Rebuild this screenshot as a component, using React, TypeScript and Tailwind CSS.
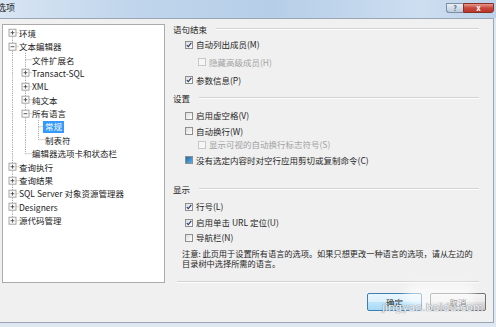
import React from 'react';

type C = { u?: boolean; d?: boolean; r?: boolean; b?: 'p' | 'm' };
const F: C = { u: true, d: true };

const rows: { t: string; c: C[]; sel?: boolean }[] = [
  { t: '环境', c: [{ d: true, r: true, b: 'p' }] },
  { t: '文本编辑器', c: [{ u: true, d: true, r: true, b: 'm' }] },
  { t: '文件扩展名', c: [F, { u: true, d: true, r: true }] },
  { t: 'Transact-SQL', c: [F, { u: true, d: true, r: true, b: 'p' }] },
  { t: 'XML', c: [F, { u: true, d: true, r: true, b: 'p' }] },
  { t: '纯文本', c: [F, { u: true, d: true, r: true, b: 'p' }] },
  { t: '所有语言', c: [F, { u: true, d: true, r: true, b: 'm' }] },
  { t: '常规', c: [F, F, { u: true, d: true, r: true }], sel: true },
  { t: '制表符', c: [F, F, { u: true, r: true }] },
  { t: '编辑器选项卡和状态栏', c: [F, { u: true, r: true }] },
  { t: '查询执行', c: [{ u: true, d: true, r: true, b: 'p' }] },
  { t: '查询结果', c: [{ u: true, d: true, r: true, b: 'p' }] },
  { t: 'SQL Server 对象资源管理器', c: [{ u: true, d: true, r: true, b: 'p' }] },
  { t: 'Designers', c: [{ u: true, d: true, r: true, b: 'p' }] },
  { t: '源代码管理', c: [{ u: true, r: true, b: 'p' }] },
];

function TreeCell({ u, d, r, b }: C) {
  const W = 13;
  const H = 13.4;
  const cx = 6.5;
  const cy = 6.7;
  const lc = '#a6a6a6';
  return (
    <svg width={W} height={H} viewBox={`0 0 ${W} ${H}`} className="block shrink-0">
      {u && <line x1={cx} y1={0} x2={cx} y2={cy} stroke={lc} strokeWidth={1} strokeDasharray="1 1" />}
      {d && <line x1={cx} y1={cy} x2={cx} y2={H} stroke={lc} strokeWidth={1} strokeDasharray="1 1" />}
      {r && <line x1={cx} y1={cy} x2={W} y2={cy} stroke={lc} strokeWidth={1} strokeDasharray="1 1" />}
      {b && (
        <>
          <rect x={3} y={3.2} width={7} height={7} fill="#fbfbfb" stroke="#9c9c9c" strokeWidth={0.9} />
          <line x1={4.6} y1={cy} x2={8.4} y2={cy} stroke="#4a4a4a" strokeWidth={0.9} />
          {b === 'p' && <line x1={cx} y1={4.8} x2={cx} y2={8.6} stroke="#4a4a4a" strokeWidth={0.9} />}
        </>
      )}
    </svg>
  );
}

function CB({ s, dis }: { s?: 'c' | 'f'; dis?: boolean }) {
  return (
    <span
      className={
        dis
          ? 'flex h-[8px] w-[8px] shrink-0 items-center justify-center border border-[#c8c8c8] bg-[#f6f6f6]'
          : 'flex h-[8px] w-[8px] shrink-0 items-center justify-center border border-[#8e8f8f] bg-[linear-gradient(135deg,#dcdcdc,#ffffff)]'
      }
    >
      {s === 'c' && (
        <svg width={6} height={6} viewBox="0 0 6 6" className="block">
          <path d="M0.8 3.1 L2.3 4.7 L5.3 0.9" fill="none" stroke="#2d3f6b" strokeWidth={1.2} />
        </svg>
      )}
      {s === 'f' && <span className="block h-[6px] w-[6px] bg-[linear-gradient(135deg,#1f68a8,#5fb0e6)]" />}
    </span>
  );
}

function Opt({ h, lvl2, s, dis, t }: { h: string; lvl2?: boolean; s?: 'c' | 'f'; dis?: boolean; t: string }) {
  return (
    <div className={`flex items-center ${h}`}>
      <div className={lvl2 ? 'ml-[25px] flex items-center gap-[3px]' : 'ml-[12px] flex items-center gap-[3px]'}>
        <CB s={s} dis={dis} />
        <span className={dis ? 'text-[#a3a3a3]' : 'text-[#262626]'}>{t}</span>
      </div>
    </div>
  );
}

function Head({ h, t }: { h: string; t: string }) {
  return (
    <div className={`flex items-center ${h}`}>
      <span className="text-[#262626]">{t}</span>
      <div className="ml-[9px] h-[2px] flex-1 border-t border-b border-t-[#d3d3d3] border-b-[#fdfdfd]" />
    </div>
  );
}

export default function App() {
  return (
    <div className="relative flex h-[327px] w-[496px] flex-col overflow-hidden bg-[#dfe8f2] font-['Noto_Sans_CJK_SC',sans-serif] text-[8.5px] leading-none">
      {/* Title bar */}
      <div className="flex h-[18px] shrink-0 items-start bg-[linear-gradient(to_right,#d8e5f3,#c1d6ec_25%,#b6cee8_55%,#cddef0_85%,#bcd2ea)]">
        <span className="-ml-[3px] mt-[3px] text-[9px] text-[#1e1e1e]">选项</span>
        <div className="ml-auto mr-[2px] mt-[3px] flex h-[10px]">
          <div className="flex w-[17px] items-center justify-center rounded-bl-[3px] border border-r-0 border-[#7c8ea4] bg-[linear-gradient(#e9eff6,#bccbdc)] text-[7px] font-bold text-[#4b5b70]">
            ?
          </div>
          <div className="flex w-[31px] items-center justify-center rounded-br-[3px] border border-[#8a2f25] bg-[linear-gradient(#e59a8c,#c9473a_50%,#b8362a)] text-[8px] font-bold text-white">
            x
          </div>
        </div>
      </div>

      {/* Body */}
      <div className="flex h-[305px] w-[494px] shrink-0 flex-col border-t border-r border-b border-[#9aa6b4] bg-[#f0f0f0]">
        <div className="flex items-start pl-[2px]">
          {/* Tree */}
          <div className="mt-[5px] flex h-[259px] w-[163px] shrink-0 flex-col border border-[#ababab] bg-white pl-[3px] pt-[1.3px]">
            {rows.map((row, i) => (
              <div key={i} className="flex h-[13.4px] items-center">
                {row.c.map((c, j) => (
                  <TreeCell key={j} {...c} />
                ))}
                <span
                  className={
                    row.sel
                      ? '-ml-[2px] flex h-[12px] items-center whitespace-nowrap bg-[#3399ff] px-[2px] text-white'
                      : '-ml-[2px] flex h-[12px] items-center whitespace-nowrap px-[2px] text-[#222]'
                  }
                >
                  {row.t}
                </span>
              </div>
            ))}
          </div>

          {/* Right column */}
          <div className="ml-[8px] mt-[3px] flex h-[261px] w-[306px] flex-col">
            <Head h="h-[14px]" t="语句结束" />
            <Opt h="h-[17px]" s="c" t="自动列出成员(M)" />
            <Opt h="h-[18px]" lvl2 dis t="隐藏高级成员(H)" />
            <Opt h="h-[18px]" s="c" t="参数信息(P)" />
            <Head h="h-[18px]" t="设置" />
            <Opt h="h-[17px]" t="启用虚空格(V)" />
            <Opt h="h-[14px]" t="自动换行(W)" />
            <Opt h="h-[13px]" lvl2 dis t="显示可视的自动换行标志符号(S)" />
            <Opt h="h-[18px]" s="f" t="没有选定内容时对空行应用剪切或复制命令(C)" />
            <div className="h-[11px]" />
            <Head h="h-[18px]" t="显示" />
            <Opt h="h-[17px]" s="c" t="行号(L)" />
            <Opt h="h-[15px]" s="c" t="启用单击 URL 定位(U)" />
            <Opt h="h-[15px]" t="导航栏(N)" />
            <div className="ml-[9px] mt-[2.5px] text-[8.2px] leading-[10.5px] text-[#262626]">
              <div className="whitespace-nowrap">注意: 此页用于设置所有语言的选项。如果只想更改一种语言的选项，请从左边的</div>
              <div className="whitespace-nowrap">目录树中选择所需的语言。</div>
            </div>
            <div className="ml-[4px] mt-auto h-[2px] border-t border-b border-t-[#d3d3d3] border-b-[#fdfdfd]" />
          </div>
        </div>

        {/* Buttons */}
        <div className="mt-[10px] flex justify-end gap-[8px] pr-[7px]">
          <div className="flex h-[18px] w-[55px] items-center justify-center rounded-[2px] border border-[#3c7fb1] bg-[linear-gradient(#eaf6fd,#d9f0fc_50%,#bee6fd_50%,#a7d9f5)] text-[#1e1e1e]">
            确定
          </div>
          <div className="flex h-[18px] w-[56px] items-center justify-center rounded-[2px] border border-[#707070] bg-[linear-gradient(#f2f2f2,#ebebeb_50%,#dddddd_50%,#cfcfcf)] text-[#1e1e1e]">
            取消
          </div>
        </div>
      </div>

      {/* Watermark overlay */}
      <div className="absolute left-[405px] top-[283px] h-[26px] w-[70px] rounded-[12px] bg-white/55 blur-[4px]" />
      <div className="absolute left-[382px] top-[302px] whitespace-nowrap font-['DejaVu_Sans',sans-serif] text-[11px] leading-none text-white/90 [text-shadow:0_0_1px_#7d8590,0_0_1px_#7d8590]">
        jingyan.baidu.com
      </div>
    </div>
  );
}
